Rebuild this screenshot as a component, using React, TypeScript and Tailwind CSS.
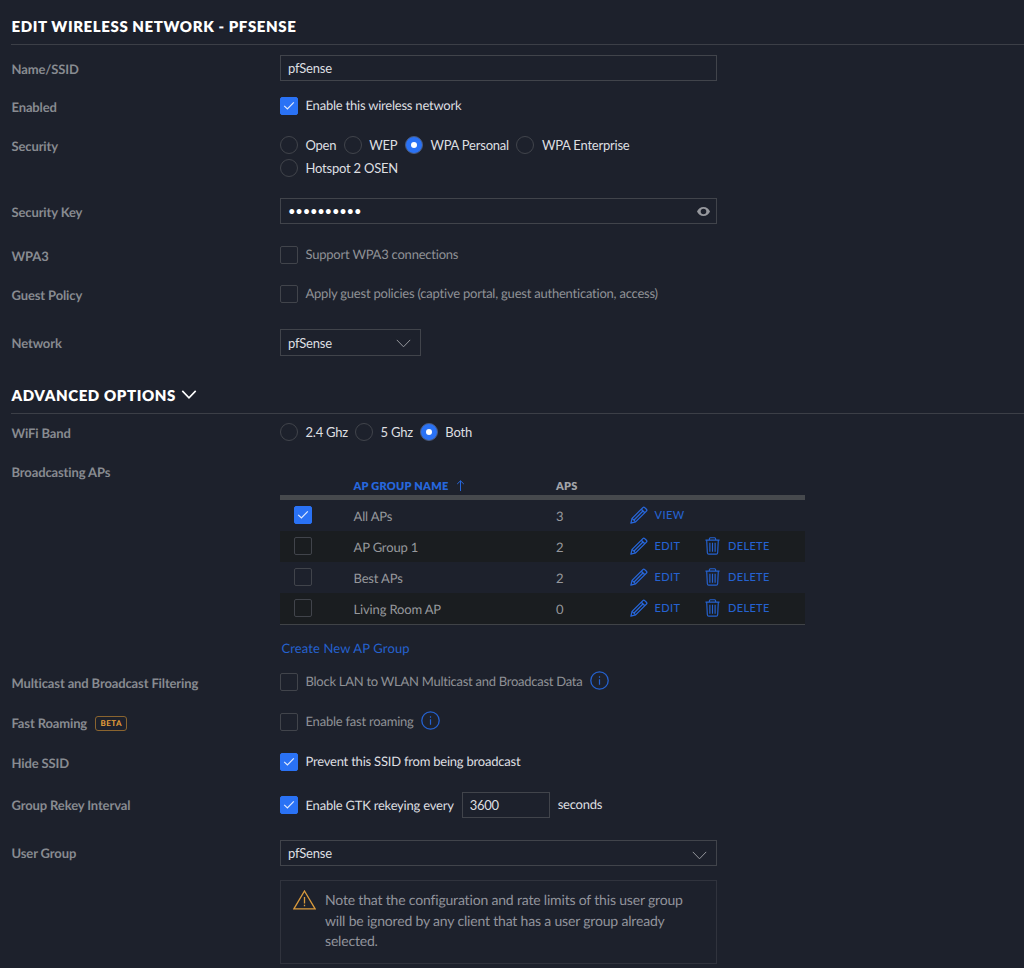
import { useState } from 'react';
import type { ReactNode } from 'react';

const apGroups = [
  { name: 'All APs', aps: 3, builtIn: true },
  { name: 'AP Group 1', aps: 2, builtIn: false },
  { name: 'Best APs', aps: 2, builtIn: false },
  { name: 'Living Room AP', aps: 0, builtIn: false },
];

const securityModes = ['Open', 'WEP', 'WPA Personal', 'WPA Enterprise', 'Hotspot 2 OSEN'];
const bands = ['2.4 Ghz', '5 Ghz', 'Both'];

function CheckBox({ checked, onChange }: { checked: boolean; onChange: () => void }) {
  return (
    <button
      type="button"
      role="checkbox"
      aria-checked={checked}
      onClick={onChange}
      className={`flex h-[18px] w-[18px] shrink-0 items-center justify-center rounded-[2px] border ${checked ? 'border-[#2a72f5] bg-[#2a72f5]' : 'border-[#41444b]'}`}
    >
      {checked && (
        <svg className="h-[10px] w-[12px] shrink-0" viewBox="0 0 12 10" fill="none" stroke="#dfe9fd" strokeWidth="1.2">
          <path d="M1.2 4.9 4.4 8 10.8 1.4" />
        </svg>
      )}
    </button>
  );
}

function Radio({ label, checked, onChange }: { label: string; checked: boolean; onChange: () => void }) {
  return (
    <button type="button" role="radio" aria-checked={checked} onClick={onChange} className="flex h-[23px] items-center">
      <span
        className={`flex h-[18px] w-[18px] items-center justify-center rounded-full border ${checked ? 'border-[#4a5a7c] bg-[#2a72f5]' : 'border-[#41444b]'}`}
      >
        {checked && <span className="h-[6px] w-[6px] rounded-full bg-white" />}
      </span>
      <span className="ml-[7.5px] mt-px text-[#dedfe1]">{label}</span>
    </button>
  );
}

function Row({ label, className, labelClass, children }: { label: ReactNode; className: string; labelClass: string; children: ReactNode }) {
  return (
    <div className={`flex items-start ${className}`}>
      <div className={`w-[269px] shrink-0 pl-[0.5px] font-bold tracking-[-0.13px] text-[#888b91] ${labelClass}`}>{label}</div>
      {children}
    </div>
  );
}

function CheckRow({ text, defaultChecked = false, children }: { text: string; defaultChecked?: boolean; children?: ReactNode }) {
  const [checked, setChecked] = useState(defaultChecked);
  return (
    <div className="flex items-center">
      <CheckBox checked={checked} onChange={() => setChecked(!checked)} />
      <span className={`ml-[7.5px] -mt-px ${checked ? 'text-[#dedfe1]' : 'text-[#8f9196]'}`}>{text}</span>
      {children}
    </div>
  );
}

function Chevron({ className }: { className: string }) {
  return (
    <svg className={className} viewBox="0 0 15 9" fill="none" stroke="currentColor">
      <path d="M.8.9 7.5 7.8 14.2.9" />
    </svg>
  );
}

function InfoIcon() {
  return (
    <svg className="-mt-[2px] ml-[7.5px] h-[19px] w-[19px]" viewBox="0 0 19 19" fill="none" stroke="#2562d0">
      <circle cx="9.5" cy="9.5" r="8.7" strokeWidth="1.3" />
      <path d="M9.5 8.2v5.6M9.5 5.2v1.5" strokeWidth="1.2" />
    </svg>
  );
}

function PencilIcon() {
  return (
    <svg className="h-[18px] w-[18px]" viewBox="0 0 18 18" fill="none" stroke="#2767dc" strokeWidth="1.3" strokeLinejoin="round">
      <path d="M.9 17.1 2.1 12.4 12.9 1.6Q13.8.7 14.7 1.6L16.4 3.3Q17.3 4.2 16.4 5.1L5.6 15.9Z" />
      <path d="M2.1 12.4 5.6 15.9M11.3 3.2 14.8 6.7M4.3 13.7 12.7 5.3" />
    </svg>
  );
}

function TrashIcon() {
  return (
    <svg className="h-[18px] w-[15px]" viewBox="0 0 16 19" fill="none" stroke="#2562d0" strokeWidth="1.25" strokeLinejoin="round">
      <path d="M.5 3.2h15M4.7 3V1.7q0-1 1-1h4.6q1 0 1 1V3M1.8 3.4l.7 13.3q.1 1.5 1.5 1.5h8q1.4 0 1.500-1.5l.7-13.3" />
      <path d="M5.2 6v9.6M8 6v9.6M10.8 6v9.6" />
    </svg>
  );
}

function ApGroupTable() {
  const [selected, setSelected] = useState('All APs');
  return (
    <div className="w-[525px]">
      <div className="flex h-[21px] items-center pt-[4px] text-[11px] font-extrabold tracking-[0.25px]">
        <div className="ml-[73.5px] flex w-[202.5px] items-center text-[#2767dc]">
          AP GROUP NAME
          <svg className="-mt-[2px] ml-[7px] h-[11px] w-[9px]" viewBox="0 0 9 11" fill="none" stroke="currentColor">
            <path d="M4.5 11V.8M1.2 4 4.5.8 7.8 4" />
          </svg>
        </div>
        <div className="text-[#a2a4a9]">APS</div>
      </div>
      <div className="border-t-[5px] border-b border-t-[#46494d] border-b-[#404347]">
        {apGroups.map((group) => (
          <div key={group.name} className="flex h-[31px] items-center even:bg-[#1a1d20]">
            <div className="w-[73.5px] pb-px pl-[14px]">
              <CheckBox checked={selected === group.name} onChange={() => setSelected(group.name)} />
            </div>
            <div className="w-[202.5px] tracking-[-0.15px] text-[#96989c]">{group.name}</div>
            <div className="w-[74px] text-[#96989c]">{group.aps}</div>
            <button type="button" className="flex w-[75px] items-center gap-[6.5px] pb-px text-[11px] font-medium tracking-[0.4px] text-[#2562d0]">
              <PencilIcon />
              {group.builtIn ? 'VIEW' : 'EDIT'}
            </button>
            {!group.builtIn && (
              <button type="button" className="flex items-center gap-[8px] pb-px text-[11px] font-medium tracking-[0.35px] text-[#2562d0]">
                <TrashIcon />
                DELETE
              </button>
            )}
          </div>
        ))}
      </div>
      <a href="#create" className="mt-[13px] ml-[1.5px] block tracking-[0.12px] text-[#2562d0]">
        Create New AP Group
      </a>
    </div>
  );
}

export default function App() {
  const [security, setSecurity] = useState('WPA Personal');
  const [band, setBand] = useState('Both');
  const [showKey, setShowKey] = useState(false);

  return (
    <div className="h-[968px] overflow-hidden bg-[#1d212c] pl-[11px] font-['Lato',sans-serif] text-[13px] leading-5 tracking-[-0.22px] [text-rendering:geometricPrecision]">
      {/* Basic settings */}
      <h1 className="flex h-[45px] items-center border-b border-[#3c3f47] pt-[9px] pl-[0.5px] text-[15px] font-extrabold tracking-[0.6px] text-white">
        EDIT WIRELESS NETWORK - PFSENSE
      </h1>
      <Row label="Name/SSID" className="h-[45px] pt-[10px]" labelClass="pt-[4px] tracking-[-0.3px]">
        <input defaultValue="pfSense" className="h-[26px] w-[437px] border border-[#41444b] bg-transparent px-[7px] text-[#dedfe1] outline-none" />
      </Row>
      <Row label="Enabled" className="h-[39px] pt-[6px]" labelClass="pt-[1px]">
        <CheckRow text="Enable this wireless network" defaultChecked />
      </Row>
      <Row label="Security" className="h-[61px] pt-[4px]" labelClass="pt-[3px]">
        <div className="flex w-[437px] flex-wrap gap-x-[7.5px]">
          {securityModes.map((mode) => (
            <Radio key={mode} label={mode} checked={security === mode} onChange={() => setSecurity(mode)} />
          ))}
        </div>
      </Row>
      <Row label="Security Key" className="h-[46px] pt-[8px]" labelClass="pt-[4px]">
        <div className="flex h-[26px] w-[437px] items-center border border-[#41444b] pr-[6px] pl-[7px]">
          <input type={showKey ? 'text' : 'password'} defaultValue="wirelesspf" className="min-w-0 flex-1 bg-transparent text-white outline-none" />
          <button type="button" aria-label="Show key" onClick={() => setShowKey(!showKey)}>
            <svg className="h-[9px] w-[13px]" viewBox="0 0 13 9">
              <path fillRule="evenodd" fill="#96989d" d="M6.5 0C3.6 0 1.1 1.8 0 4.5 1.1 7.2 3.6 9 6.5 9S11.9 7.2 13 4.5C11.9 1.8 9.4 0 6.5 0Zm0 1.7a2.8 2.8 0 1 1 0 5.6 2.8 2.8 0 0 1 0-5.6Z" />
            </svg>
          </button>
        </div>
      </Row>
      <Row label="WPA3" className="h-[40px] pt-[9px]" labelClass="pt-[1px]">
        <CheckRow text="Support WPA3 connections" />
      </Row>
      <Row label="Guest Policy" className="h-[44px] pt-[8px]" labelClass="pt-[1px]">
        <CheckRow text="Apply guest policies (captive portal, guest authentication, access)" />
      </Row>
      <Row label="Network" className="h-[51px] pt-[9px]" labelClass="pt-[4px]">
        <button type="button" className="flex h-[27px] w-[141px] items-center justify-between border border-[#41444b] pr-[9px] pl-[7px] text-[#dedfe1]">
          pfSense
          <Chevron className="mt-[2px] h-[9px] w-[15px] text-[#96989d]" />
        </button>
      </Row>

      {/* Advanced options */}
      <h2 className="flex h-[43px] items-center border-b border-[#3c3f47] pt-[7px] pl-[0.5px] text-[15px] font-extrabold tracking-[0.6px] text-white">
        ADVANCED OPTIONS
        <Chevron className="-mt-[2px] ml-[5px] h-[9px] w-[16px] stroke-[1.6]" />
      </h2>
      <Row label="WiFi Band" className="h-[41px] pt-[6px]" labelClass="pt-[3px]">
        <div className="flex gap-x-[7px]">
          {bands.map((name) => (
            <Radio key={name} label={name} checked={band === name} onChange={() => setBand(name)} />
          ))}
        </div>
      </Row>
      <Row label="Broadcasting APs" className="h-[209px] pt-[7px]" labelClass="">
        <div className="pt-[12px]">
          <ApGroupTable />
        </div>
      </Row>
      <Row label="Multicast and Broadcast Filtering" className="h-[40px] pt-[8px]" labelClass="pt-[1px]">
        <div className="tracking-[-0.26px]">
          <CheckRow text="Block LAN to WLAN Multicast and Broadcast Data">
            <InfoIcon />
          </CheckRow>
        </div>
      </Row>
      <Row
        label={
          <div className="flex items-center">
            Fast Roaming
            <span className="ml-[8px] flex h-[15px] items-center rounded-[3px] border border-[#8a642f] px-[4.5px] text-[8px] font-bold tracking-[0.4px] text-[#e9a23b]">
              BETA
            </span>
          </div>
        }
        className="h-[40px] pt-[8px]"
        labelClass="pt-[1px]"
      >
        <CheckRow text="Enable fast roaming">
          <InfoIcon />
        </CheckRow>
      </Row>
      <Row label="Hide SSID" className="h-[40px] pt-[8px]" labelClass="pt-[1px]">
        <CheckRow text="Prevent this SSID from being broadcast" defaultChecked />
      </Row>
      <Row label="Group Rekey Interval" className="h-[48px] pt-[8px]" labelClass="pt-[3px]">
        <CheckRow text="Enable GTK rekeying every" defaultChecked>
          <input defaultValue="3600" className="ml-[8px] h-[26px] w-[88px] border border-[#41444b] bg-transparent px-[7px] text-[#dedfe1] outline-none" />
          <span className="-mt-[2px] ml-[8px] text-[#dedfe1]">seconds</span>
        </CheckRow>
      </Row>
      <Row label="User Group" className="pt-[8px]" labelClass="pt-[3px]">
        <div>
          <button type="button" className="flex h-[26px] w-[437px] items-center justify-between border border-[#41444b] pr-[9px] pl-[7px] text-[#dedfe1]">
            pfSense
            <Chevron className="mt-[4px] h-[9px] w-[15px] text-[#96989d]" />
          </button>
          <div className="mt-[14px] flex h-[84px] w-[437px] border border-[#30333d] pt-[9px] pl-[12px]">
            <svg className="h-[20px] w-[23px] shrink-0" viewBox="0 0 23 20" fill="none" stroke="#d99a3c" strokeWidth="1.3">
              <path d="M11.5 1 22.1 18.8H.9Z" />
              <path d="M11.5 7v6.5M11.5 14.8v1.5" />
            </svg>
            <p className="ml-[9px] w-[370px] text-[14px] leading-[20.5px] tracking-[-0.18px] text-[#92949c]">
              Note that the configuration and rate limits of this user group will be ignored by any client that has a user group already selected.
            </p>
          </div>
        </div>
      </Row>
    </div>
  );
}
